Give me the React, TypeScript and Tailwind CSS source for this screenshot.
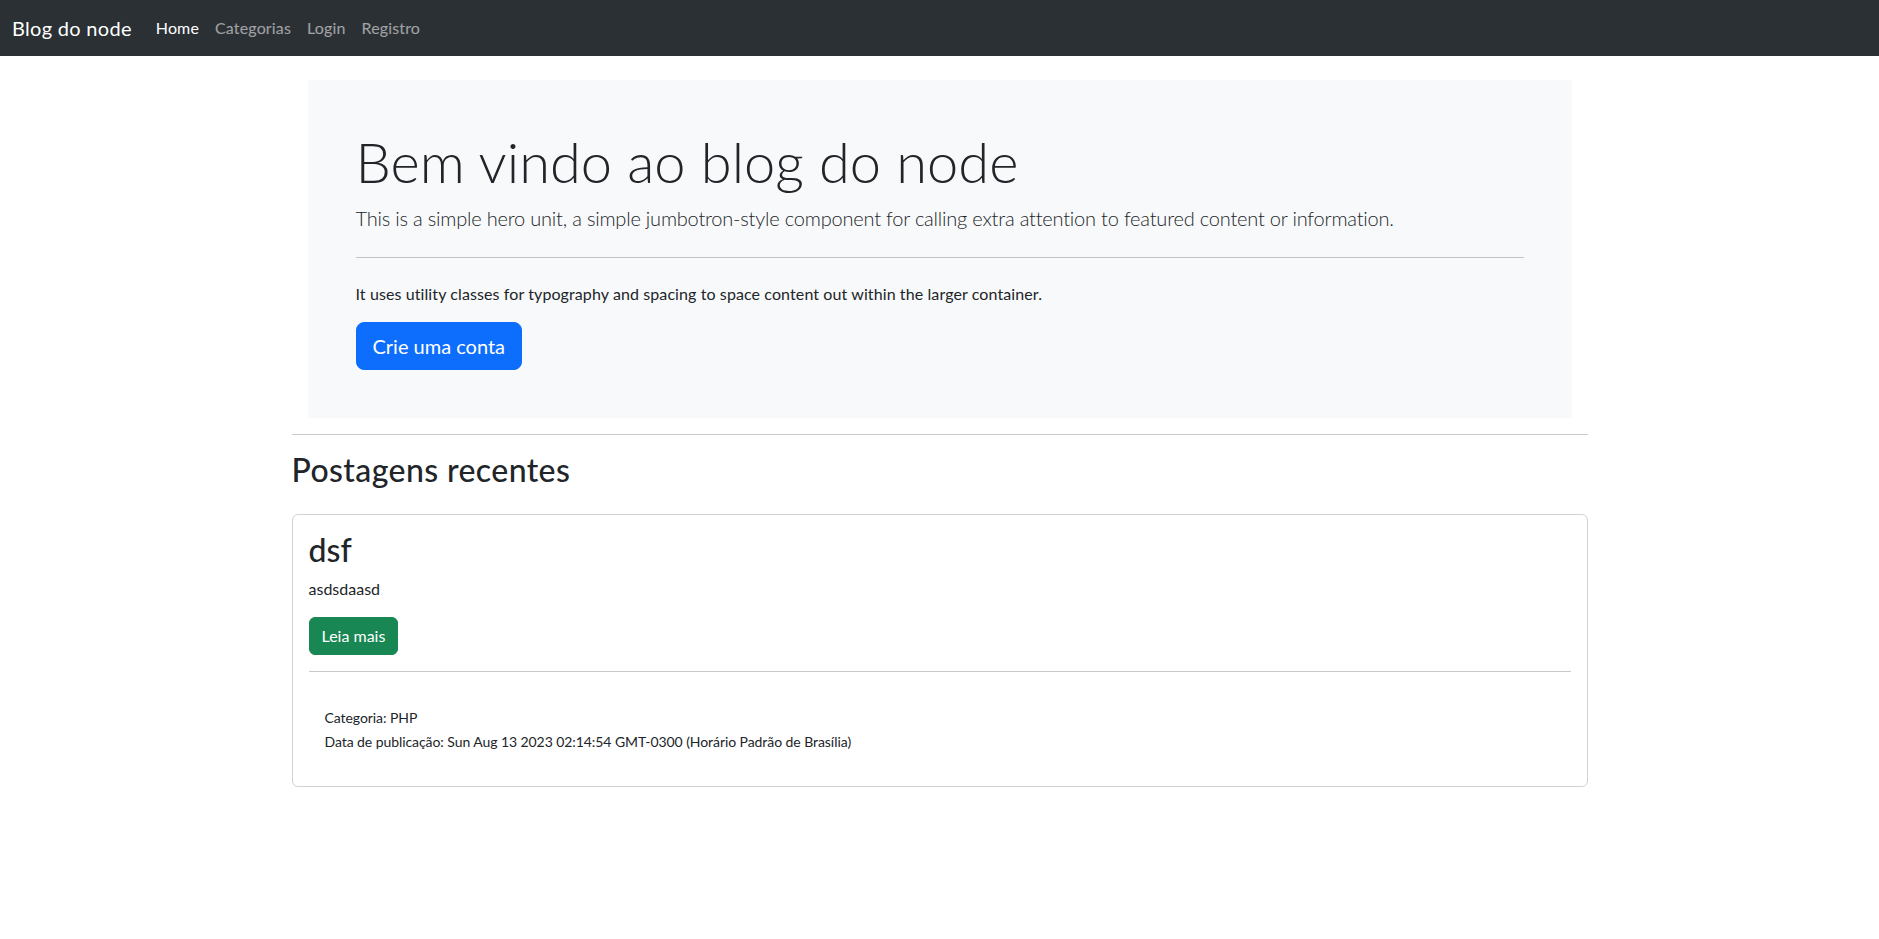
export default function App() {
  const links = [
    { label: "Home", active: true },
    { label: "Categorias", active: false },
    { label: "Login", active: false },
    { label: "Registro", active: false },
  ];

  return (
    <div className="min-h-screen bg-white text-[#212529] font-['Lato','Noto_Sans',sans-serif] text-[16px] leading-[1.5]">
      {/* Navbar */}
      <nav className="h-14 bg-[#2b3035] flex items-center px-3">
        <a href="#" className="text-[20px] leading-[30px] py-[5px] mr-4 text-white tracking-[0.3px]">
          Blog do node
        </a>
        <ul className="flex items-center">
          {links.map((l) => (
            <li key={l.label}>
              <a
                href="#"
                className={
                  l.active
                    ? "block px-2 py-2 leading-[24px] text-white tracking-[0.15px]"
                    : "block px-2 py-2 leading-[24px] text-white/55 tracking-[0.15px]"
                }
              >
                {l.label}
              </a>
            </li>
          ))}
        </ul>
      </nav>

      <main className="mx-auto w-[1320px] px-3">
        {/* Hero */}
        <div className="mx-4 mt-6 bg-[#f8f9fa] p-12">
          <h1 className="text-[56px] font-light leading-[1.2] mb-2">
            Bem vindo ao blog do node
          </h1>
          <p className="text-[20px] font-light leading-[1.5] tracking-[-0.2px]">
            This is a simple hero unit, a simple jumbotron-style component for calling extra attention to featured content or information.
          </p>
          <hr className="my-6 border-t border-[#c2c3c5]" />
          <p className="mb-4 tracking-[0.1px]">
            It uses utility classes for typography and spacing to space content out within the larger container.
          </p>
          <a
            href="#"
            className="inline-block bg-[#0d6efd] border border-[#0d6efd] text-white text-[20px] leading-[1.5] px-4 py-2 rounded-lg"
          >
            Crie uma conta
          </a>
        </div>

        <hr className="my-4 border-t border-[#c8c9ca]" />

        <h2 className="text-[32px] font-medium leading-[1.2] mb-6 tracking-[0.4px]">Postagens recentes</h2>

        {/* Post card */}
        <div className="border border-[#d2d2d2] rounded-md p-4">
          <h2 className="text-[32px] font-medium leading-[1.2] mb-2">dsf</h2>
          <p className="mb-4">asdsdaasd</p>
          <a
            href="#"
            className="inline-block bg-[#198754] border border-[#198754] text-white leading-[1.5] px-3 py-1.5 rounded-md"
          >
            Leia mais
          </a>
          <hr className="my-4 border-t border-[#c8c9ca]" />
          <div className="pl-4 pt-[18px] mb-4 text-[14px] leading-[24px] tracking-[-0.07px]">
            <p>Categoria: PHP</p>
            <p>Data de publicação: Sun Aug 13 2023 02:14:54 GMT-0300 (Horário Padrão de Brasília)</p>
          </div>
        </div>
      </main>
    </div>
  );
}
